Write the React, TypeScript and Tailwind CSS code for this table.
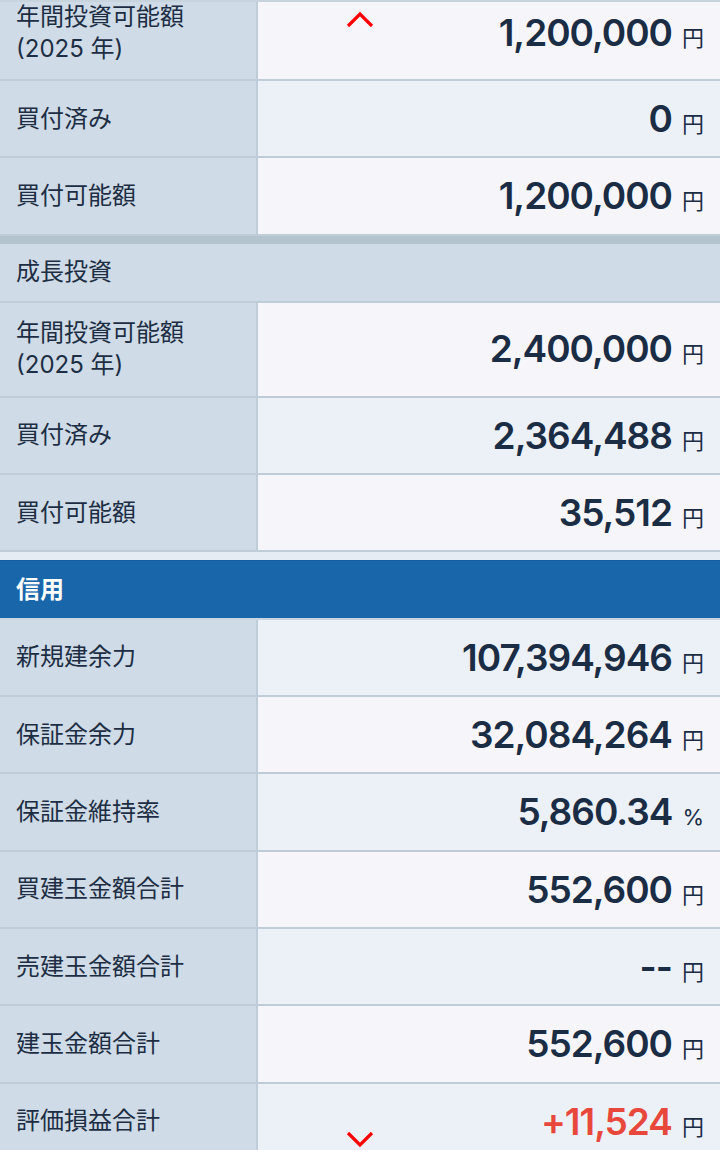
import React from 'react'

type Row = {
  label: React.ReactNode
  value: string
  unit?: string
  tone: 'white' | 'blue'
  tall?: boolean
  red?: boolean
}

const nisaRows: Row[] = [
  { label: <>年間投資可能額<br />(2025 年)</>, value: '1,200,000', tone: 'white', tall: true },
  { label: '買付済み', value: '0', tone: 'blue' },
  { label: '買付可能額', value: '1,200,000', tone: 'white' },
]

const growthRows: Row[] = [
  { label: <>年間投資可能額<br />(2025 年)</>, value: '2,400,000', tone: 'white', tall: true },
  { label: '買付済み', value: '2,364,488', tone: 'blue' },
  { label: '買付可能額', value: '35,512', tone: 'white' },
]

const creditRows: Row[] = [
  { label: '新規建余力', value: '107,394,946', tone: 'blue' },
  { label: '保証金余力', value: '32,084,264', tone: 'white' },
  { label: '保証金維持率', value: '5,860.34', unit: '%', tone: 'blue' },
  { label: '買建玉金額合計', value: '552,600', tone: 'white' },
  { label: '売建玉金額合計', value: '--', tone: 'blue' },
  { label: '建玉金額合計', value: '552,600', tone: 'white' },
  { label: '評価損益合計', value: '+11,524', tone: 'blue', red: true },
]

function DataRow({ row }: { row: Row }) {
  return (
    <div
      className={`flex border-b-2 border-[#bfcdd8] ${row.tall ? 'h-[95px]' : 'h-[77.33px]'}`}
    >
      <div className="w-[258px] shrink-0 flex items-center px-4 bg-[#cfdbe6] border-r-2 border-[#bfcdd8] text-[24px] leading-[32px] text-[#1d2e44]">
        <div>{row.label}</div>
      </div>
      <div
        className={`flex-1 flex items-center justify-end pr-4 ${
          row.tone === 'white' ? 'bg-[#f6f6fa]' : 'bg-[#ecf1f8]'
        }`}
      >
        <div className="flex items-baseline">
          <span
            className={`text-[37px] font-semibold tracking-[-1px] ${
              row.red ? 'text-[#e8473b]' : 'text-[#1b2d45]'
            }`}
          >
            {row.value}
          </span>
          <span className="ml-2.5 text-[22px] text-[#1b2d45]">{row.unit ?? '円'}</span>
        </div>
      </div>
    </div>
  )
}

export default function App() {
  return (
    <div
      className="relative w-full h-[1150px] overflow-hidden border-t-2 border-[#c7d3dd] bg-[#f6f6fa]"
      style={{ fontFamily: 'Inter, "Noto Sans CJK JP", sans-serif' }}
    >
      <div className="-mt-[16px]">
        {nisaRows.map((r, i) => (
          <DataRow key={`n${i}`} row={r} />
        ))}
        <div className="h-[8.5px] bg-[#b4c4cf]" />

        {/* 成長投資 */}
        <div className="h-[58.5px] flex items-center px-4 bg-[#cfdbe6] border-b-2 border-[#bfcdd8] text-[24px] text-[#1d2e44]">
          成長投資
        </div>
        {growthRows.map((r, i) => (
          <DataRow key={`g${i}`} row={r} />
        ))}
        <div className="h-[8px] bg-[#e5ecf3]" />

        {/* 信用 */}
        <div className="h-[59.5px] flex items-center px-4 bg-[#1966ab] border-t border-[#155c9e] border-b-2 border-b-[#c9d6e1] text-[24px] font-bold text-white">
          信用
        </div>
        {creditRows.map((r, i) => (
          <DataRow key={`c${i}`} row={r} />
        ))}
      </div>

      {/* scroll indicators */}
      <svg className="absolute left-[346px] top-[9px]" width="28" height="18" viewBox="0 0 28 18">
        <path d="M2 15 L14 3 L26 15" fill="none" stroke="#ff0000" strokeWidth="3.2" />
      </svg>
      <svg className="absolute left-[346px] top-[1128px]" width="28" height="18" viewBox="0 0 28 18">
        <path d="M2 3 L14 15 L26 3" fill="none" stroke="#ff0000" strokeWidth="3.2" />
      </svg>
    </div>
  )
}
